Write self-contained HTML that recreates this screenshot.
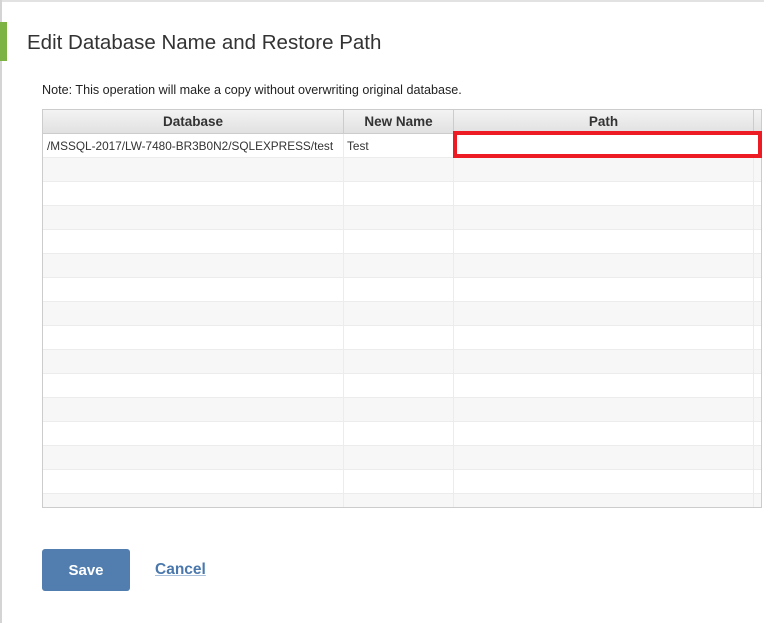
<!DOCTYPE html>
<html><head><style>
body{margin:0;width:764px;height:629px;background:#fff;font-family:"Liberation Sans",sans-serif;position:relative;overflow:hidden}
.lb{position:absolute;left:0;top:0;width:2px;height:623px;background:#d4d4d4}
.tb{position:absolute;left:0;top:0;width:764px;height:2px;background:#e2e2e2}
.gb{position:absolute;left:0;top:22px;width:7px;height:39px;background:#7cb342}
h1{position:absolute;left:27px;top:30px;margin:0;font-weight:normal;font-size:20.5px;color:#333;line-height:26px}
.note{position:absolute;left:42px;top:83px;font-size:12.6px;color:#222}
.tbl{position:absolute;left:42px;top:109px;width:718px;height:397px;border:1px solid #ccc;overflow:hidden;background:#fff}
.hdr{position:absolute;left:0;top:0;width:718px;height:23px;background:linear-gradient(#f3f3f3,#e1e1e1);border-bottom:1px solid #ccc}
.hdr div{position:absolute;top:0;height:23px;line-height:24px;text-align:center;font-weight:bold;font-size:13.5px;color:#333;border-right:1px solid #ccc;box-sizing:border-box}
.row{position:absolute;left:0;width:718px;height:24px;border-bottom:1px solid #ececec;box-sizing:border-box}
.g{background:#f7f7f7}
.vl{position:absolute;top:24px;bottom:0;width:1px;background:#ececec}
.cell{position:absolute;top:29px;font-size:11.8px;color:#333;white-space:nowrap}
.red{position:absolute;left:453px;top:131px;width:309px;height:27px;border:4px solid #ed1c24;box-sizing:border-box;background:#fff}
.save{position:absolute;left:42px;top:549px;width:88px;height:42px;background:#517eaf;border-radius:3px;color:#fff;font-weight:bold;font-size:15px;text-align:center;line-height:44px}
.cancel{position:absolute;left:155px;top:561px;font-weight:bold;font-size:15.5px;color:#4a78ad;text-decoration:underline;text-decoration-color:#a9c0dc}
</style></head><body>
<div class="tb"></div><div class="lb"></div><div class="gb"></div>
<h1>Edit Database Name and Restore Path</h1>
<div class="note">Note: This operation will make a copy without overwriting original database.</div>
<div class="tbl">
<div class="row" style="top:24px"></div>
<div class="row g" style="top:48px"></div>
<div class="row" style="top:72px"></div>
<div class="row g" style="top:96px"></div>
<div class="row" style="top:120px"></div>
<div class="row g" style="top:144px"></div>
<div class="row" style="top:168px"></div>
<div class="row g" style="top:192px"></div>
<div class="row" style="top:216px"></div>
<div class="row g" style="top:240px"></div>
<div class="row" style="top:264px"></div>
<div class="row g" style="top:288px"></div>
<div class="row" style="top:312px"></div>
<div class="row g" style="top:336px"></div>
<div class="row" style="top:360px"></div>
<div class="row g" style="top:384px"></div>
<div class="vl" style="left:300px"></div>
<div class="vl" style="left:410px"></div>
<div class="vl" style="left:710px"></div>
<div class="hdr"><div style="left:0;width:301px">Database</div><div style="left:301px;width:110px">New Name</div><div style="left:411px;width:300px">Path</div></div>
<div class="cell" style="left:4px">/MSSQL-2017/LW-7480-BR3B0N2/SQLEXPRESS/test</div>
<div class="cell" style="left:304px">Test</div>
</div>
<div class="red"></div>
<div class="save">Save</div>
<div class="cancel">Cancel</div>
</body></html>
